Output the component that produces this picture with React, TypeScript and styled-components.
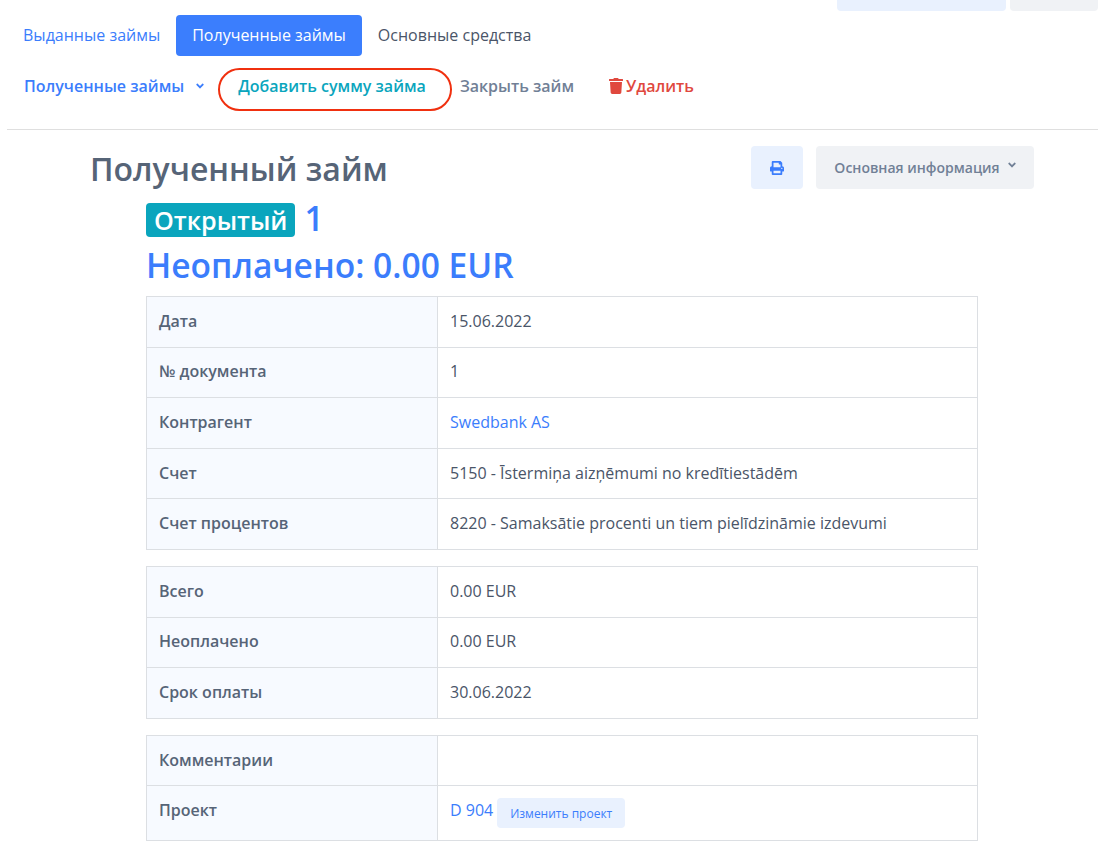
import React from "react";
import styled, { createGlobalStyle } from "styled-components";
import { FaTrash, FaPrint, FaAngleDown } from "react-icons/fa";

const Global = createGlobalStyle`
  html, body { margin: 0; padding: 0; background: #fff; }
  body { font-family: "Open Sans", "Noto Sans", sans-serif; color: #4a5568; height: 850px; overflow: hidden; }
`;

const Page = styled.div`
  width: 1098px;
  height: 850px;
  overflow: hidden;
`;
const TopStub = styled.div`
  display: flex;
  justify-content: flex-end;
  gap: 4px;
  height: 11px;
`;
const Stub = styled.div<{ $w: number; $bg: string }>`
  width: ${p => p.$w}px;
  background: ${p => p.$bg};
  border-radius: 0 0 4px 4px;
`;
const Tabs = styled.nav`
  display: flex;
  align-items: center;
  margin: 4px 0 0 7px;
  height: 41px;
`;
const Tab = styled.a<{ $active?: boolean; $muted?: boolean }>`
  display: flex;
  align-items: center;
  height: 41px;
  padding: 0 16px 1px;
  box-sizing: border-box;
  font-size: 16px;
  border-radius: 4px;
  color: ${p => (p.$active ? "#fff" : p.$muted ? "#4a5568" : "#3b7dfc")};
  background: ${p => (p.$active ? "#3b7efd" : "transparent")};
`;
const Actions = styled.nav`
  display: flex;
  align-items: center;
  gap: 34px;
  height: 44px;
  margin: 8px 0 0 24px;
  font-size: 16px;
  font-weight: 600;
`;
const ActionMenu = styled.a`
  display: flex;
  align-items: center;
  gap: 10px;
  color: #3b7dfc;
  margin-right: -2px;
`;
const Circled = styled.a`
  position: relative;
  color: #0aa5bd;
  &::after {
    content: "";
    position: absolute;
    left: -20px;
    right: -26px;
    top: -7px;
    bottom: -14px;
    border: 2px solid #f0300f;
    border-radius: 22px;
  }
`;
const Muted = styled.a`
  color: #718096;
`;
const Danger = styled.a`
  display: flex;
  align-items: center;
  gap: 2px;
  color: #e0483e;
`;
const Divider = styled.hr`
  border: 0;
  border-top: 1px solid #dfdfdf;
  margin: 21px 0 0 7px;
`;
const Header = styled.header`
  display: flex;
  align-items: flex-start;
  justify-content: space-between;
  margin: 16px 64px 0 90px;
`;
const Title = styled.h1`
  margin: 4px 0 0;
  font-size: 32px;
  line-height: 37px;
  font-weight: 600;
  color: #566477;
`;
const HeaderTools = styled.div`
  display: flex;
  gap: 13px;
`;
const IconButton = styled.button`
  width: 52px;
  height: 43px;
  border: 0;
  border-radius: 4px;
  background: #e9f1fe;
  color: #3b7dfc;
  display: flex;
  align-items: center;
  justify-content: center;
  font-size: 14px;
`;
const InfoButton = styled.button`
  width: 218px;
  height: 43px;
  border: 0;
  border-radius: 4px;
  background: #f0f2f5;
  color: #718096;
  display: flex;
  align-items: center;
  justify-content: center;
  gap: 6px;
  padding: 0 0 0 2px;
  font: 600 14px "Open Sans", "Noto Sans", sans-serif;
  svg { margin-bottom: 5px; }
`;
const Content = styled.main`
  margin: 14px 120px 0 146px;
`;
const StatusLine = styled.div`
  display: flex;
  align-items: center;
  gap: 9px;
  height: 34px;
`;
const Badge = styled.span`
  display: flex;
  align-items: center;
  height: 34px;
  padding: 0 8px;
  border-radius: 4px;
  background: #0aa5bd;
  color: #fff;
  font-size: 25.2px;
  font-weight: 600;
`;
const DocNumber = styled.span`
  color: #3b7dfc;
  font-size: 33.6px;
  font-weight: 600;
  line-height: 34px;
  margin-bottom: 4px;
`;
const Unpaid = styled.div`
  color: #3b7dfc;
  font-size: 33.6px;
  font-weight: 600;
  line-height: 44px;
  margin: 6px 0 9px;
`;
const Table = styled.table`
  width: 832px;
  border-collapse: collapse;
  table-layout: fixed;
  margin-bottom: 16px;
  font-size: 16px;
`;
const Label = styled.th<{ $raised?: boolean }>`
  width: 291px;
  height: 50.6px;
  box-sizing: border-box;
  padding: 0 12px ${p => (p.$raised ? 6 : 2)}px;
  text-align: left;
  font-weight: 600;
  color: #566477;
  background: #f7faff;
  border: 1px solid #dcdfe3;
`;
const Value = styled.td`
  height: 50.6px;
  box-sizing: border-box;
  padding: 0 12px 2px;
  color: #4a5568;
  border: 1px solid #dcdfe3;
`;
const Link = styled.a`
  color: #3b7dfc;
`;
const ProjectCell = styled.div`
  display: flex;
  align-items: center;
  gap: 4px;
  height: 52px;
`;
const ProjectLink = styled(Link)`
  margin-bottom: 4px;
`;
const SmallButton = styled.button`
  height: 30px;
  width: 128px;
  border: 0;
  border-radius: 4px;
  background: #e9f1fe;
  color: #3b7dfc;
  font: 12px "Open Sans", "Noto Sans", sans-serif;
  margin-top: 2px;
`;

type Row = [string, React.ReactNode];
const t1: Row[] = [
  ["Дата", "15.06.2022"],
  ["№ документа", "1"],
  ["Контрагент", <Link>Swedbank AS</Link>],
  ["Счет", "5150 - Īstermiņa aizņēmumi no kredītiestādēm"],
  ["Счет процентов", "8220 - Samaksātie procenti un tiem pielīdzināmie izdevumi"],
];
const t2: Row[] = [
  ["Всего", "0.00 EUR"],
  ["Неоплачено", "0.00 EUR"],
  ["Срок оплаты", "30.06.2022"],
];
const t3: Row[] = [
  ["Комментарии", ""],
  ["Проект", <ProjectCell><ProjectLink>D 904</ProjectLink><SmallButton>Изменить проект</SmallButton></ProjectCell>],
];

const InfoTable = ({ rows }: { rows: Row[] }) => (
  <Table>
    <tbody>
      {rows.map(([k, v]) => (
        <tr key={k}>
          <Label $raised={k === "Проект"}>{k}</Label>
          <Value>{v}</Value>
        </tr>
      ))}
    </tbody>
  </Table>
);

export default function App() {
  return (
    <Page>
      <Global />
      <TopStub>
        <Stub $w={169} $bg="#e9f1fe" />
        <Stub $w={88} $bg="#f0f2f5" />
      </TopStub>
      <Tabs>
        <Tab>Выданные займы</Tab>
        <Tab $active>Полученные займы</Tab>
        <Tab $muted>Основные средства</Tab>
      </Tabs>
      <Actions>
        <ActionMenu>Полученные займы <FaAngleDown size={12} /></ActionMenu>
        <Circled>Добавить сумму займа</Circled>
        <Muted>Закрыть займ</Muted>
        <Danger><FaTrash size={16} />Удалить</Danger>
      </Actions>
      <Divider />
      <Header>
        <Title>Полученный займ</Title>
        <HeaderTools>
          <IconButton><FaPrint /></IconButton>
          <InfoButton>Основная информация <FaAngleDown size={12} /></InfoButton>
        </HeaderTools>
      </Header>
      <Content>
        <StatusLine>
          <Badge>Открытый</Badge>
          <DocNumber>1</DocNumber>
        </StatusLine>
        <Unpaid>Неоплачено: 0.00 EUR</Unpaid>
        <InfoTable rows={t1} />
        <InfoTable rows={t2} />
        <InfoTable rows={t3} />
      </Content>
    </Page>
  );
}
